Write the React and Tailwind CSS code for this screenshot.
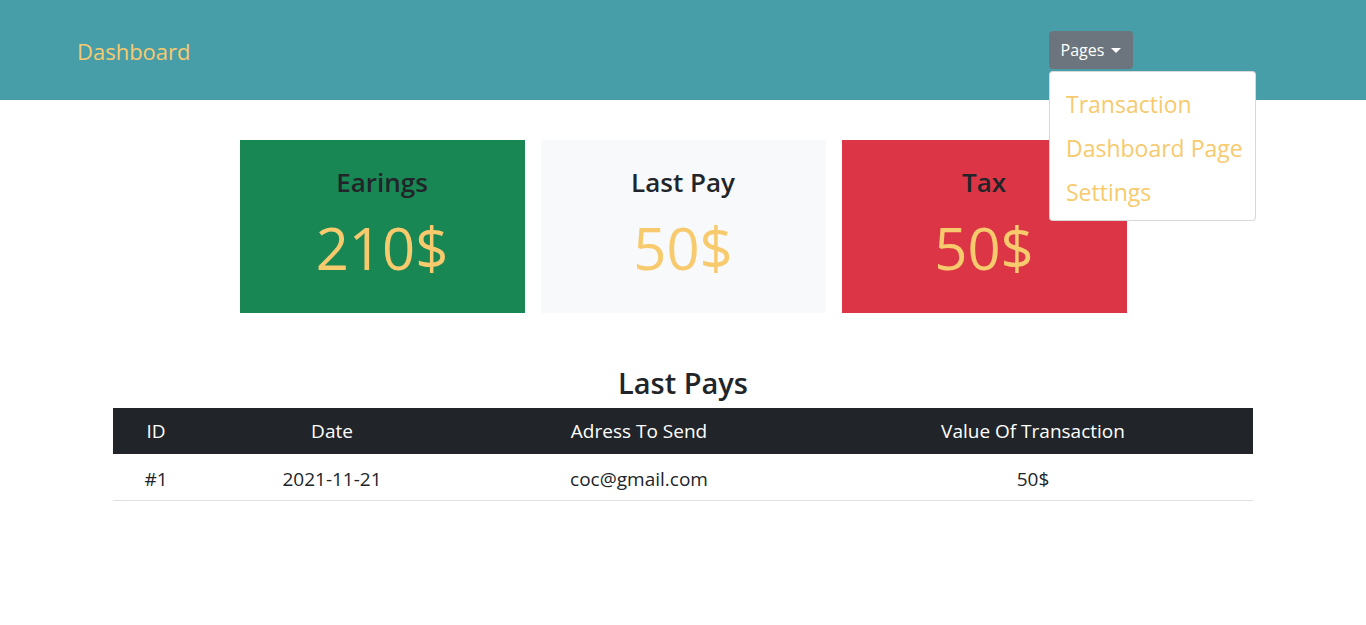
export default function App() {
  const font = { fontFamily: '"Open Sans", "Noto Sans", sans-serif' };
  const cards = [
    { t: "Earings", v: "210$", bg: "bg-[#198754]" },
    { t: "Last Pay", v: "50$", bg: "bg-[#f8f9fa]" },
    { t: "Tax", v: "50$", bg: "bg-[#dc3545]" },
  ];
  return (
    <div className="min-h-[625px] bg-white text-[#212529]" style={font}>
      <nav className="h-[100px] bg-[#479ea8] flex items-center pl-[77px] pr-[233px]">
        <span className="text-[22px] leading-[30px] text-[#f7ca6e] mt-[2px]">Dashboard</span>
        <div className="ml-auto relative">
          <button className="w-[84px] h-[38px] rounded-[4px] bg-[#6c757d] text-white text-[16px] flex items-center justify-center">
            Pages
            <span className="ml-[7px] w-0 h-0 border-l-[5px] border-r-[5px] border-t-[5px] border-l-transparent border-r-transparent border-t-white"></span>
          </button>
          <div className="absolute left-0 top-[40px] w-[207px] bg-white border border-[rgba(0,0,0,0.15)] rounded-[4px] py-2 z-10">
            {["Transaction", "Dashboard Page", "Settings"].map((t) => (
              <div key={t} className="px-4 text-[23px] leading-[36px] text-[#f7ca6e] whitespace-nowrap pt-[6px] pb-[2px]">{t}</div>
            ))}
          </div>
        </div>
      </nav>

      <div className="flex justify-center gap-4 mt-10">
        {cards.map((c) => (
          <div key={c.t} className={`w-[285px] h-[173px] ${c.bg} flex flex-col items-center pt-[25px]`}>
            <div className="text-[26px] leading-[34px] font-semibold">{c.t}</div>
            <div className="text-[58px] leading-[70px] text-[#f7ca6e] mt-[14px]">{c.v}</div>
          </div>
        ))}
      </div>

      <div className="w-[1140px] mx-auto mt-[51px]">
        <h2 className="text-[29px] leading-[38px] font-semibold text-center mb-[6px]">Last Pays</h2>
        <table className="w-full text-[19px] border-collapse">
          <colgroup>
            <col className="w-[86px]" />
            <col className="w-[266px]" />
            <col className="w-[348px]" />
            <col className="w-[440px]" />
          </colgroup>
          <thead>
            <tr className="bg-[#212529] text-white">
              <th className="font-normal h-[46px] py-2 leading-[30px]">ID</th>
              <th className="font-normal py-2 leading-[30px]">Date</th>
              <th className="font-normal py-2 leading-[30px]">Adress To Send</th>
              <th className="font-normal py-2 leading-[30px]">Value Of Transaction</th>
            </tr>
          </thead>
          <tbody>
            <tr className="border-b border-[#dee2e6] text-center">
              <td className="leading-[30px] pt-[10px] pb-[6px]">#1</td>
              <td className="leading-[30px] pt-[10px] pb-[6px]">2021-11-21</td>
              <td className="leading-[30px] pt-[10px] pb-[6px]">coc@gmail.com</td>
              <td className="leading-[30px] pt-[10px] pb-[6px]">50$</td>
            </tr>
          </tbody>
        </table>
      </div>
    </div>
  );
}
